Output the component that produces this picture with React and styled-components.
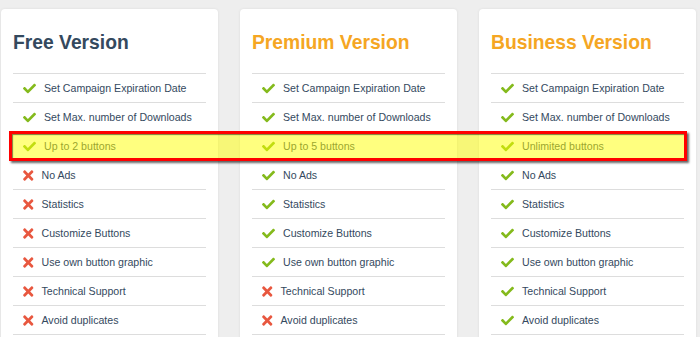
import styled, { createGlobalStyle } from "styled-components";
import { FaCheck, FaTimes } from "react-icons/fa";

const GlobalStyle = createGlobalStyle`
  html, body {
    margin: 0;
    padding: 0;
    background: #eeeeee;
    font-family: "Liberation Sans", Arial, sans-serif;
  }
`;

const Page = styled.div`
  position: relative;
  width: 700px;
  height: 337px;
  overflow: hidden;
  padding: 9px 0 0 1px;
  box-sizing: border-box;
`;

const Plans = styled.div`
  display: flex;
  gap: 22px;
  align-items: flex-start;
`;

const Card = styled.div`
  width: 217px;
  box-sizing: border-box;
  background: #ffffff;
  border-radius: 4px;
  padding: 23px 12px 20px;
  box-shadow: 0 0 3px rgba(0, 0, 0, 0.08);
`;

const Title = styled.h2`
  margin: 0 0 19px;
  font-size: 19.3px;
  line-height: 22px;
  font-weight: 700;
  white-space: nowrap;
  color: ${(p) => (p.$accent ? "#f5a623" : "#34495e")};
`;

const Features = styled.ul`
  list-style: none;
  margin: 0;
  padding: 0;
  border-top: 1px solid #dddddd;
`;

const Feature = styled.li`
  display: flex;
  align-items: center;
  height: 28px;
  padding-left: 10px;
  border-bottom: 1px solid #dddddd;
  font-size: 10.6px;
  white-space: nowrap;
  color: #34495e;
`;

const Icon = styled.span`
  display: inline-flex;
  margin-right: 8px;
  color: ${(p) => (p.$ok ? "#84ba1c" : "#e8573f")};

  svg {
    width: ${(p) => (p.$ok ? "13px" : "10.5px")};
    height: ${(p) => (p.$ok ? "13px" : "15px")};
  }
`;

const Highlight = styled.div`
  position: absolute;
  left: 9px;
  top: 131px;
  width: 678px;
  height: 30px;
  box-sizing: border-box;
  border: 3px solid #ff0000;
  background: rgba(255, 255, 0, 0.5);
  box-shadow: 2px 2px 2px rgba(0, 0, 0, 0.6), inset 1px 1px 1px rgba(0, 0, 0, 0.5);
  pointer-events: none;
`;

const features = [
  "Set Campaign Expiration Date",
  "Set Max. number of Downloads",
  null,
  "No Ads",
  "Statistics",
  "Customize Buttons",
  "Use own button graphic",
  "Technical Support",
  "Avoid duplicates",
];

const plans = [
  { name: "Free Version", accent: false, buttons: "Up to 2 buttons", included: 3 },
  { name: "Premium Version", accent: true, buttons: "Up to 5 buttons", included: 7 },
  { name: "Business Version", accent: true, buttons: "Unlimited buttons", included: 9 },
];

function PlanCard({ plan }) {
  return (
    <Card>
      <Title $accent={plan.accent}>{plan.name}</Title>
      <Features>
        {features.map((label, i) => {
          const ok = i < plan.included;
          return (
            <Feature key={i}>
              <Icon $ok={ok}>{ok ? <FaCheck /> : <FaTimes />}</Icon>
              {label ?? plan.buttons}
            </Feature>
          );
        })}
      </Features>
    </Card>
  );
}

export default function App() {
  return (
    <>
      <GlobalStyle />
      <Page>
        <Plans>
          {plans.map((plan) => (
            <PlanCard key={plan.name} plan={plan} />
          ))}
        </Plans>
        <Highlight />
      </Page>
    </>
  );
}
